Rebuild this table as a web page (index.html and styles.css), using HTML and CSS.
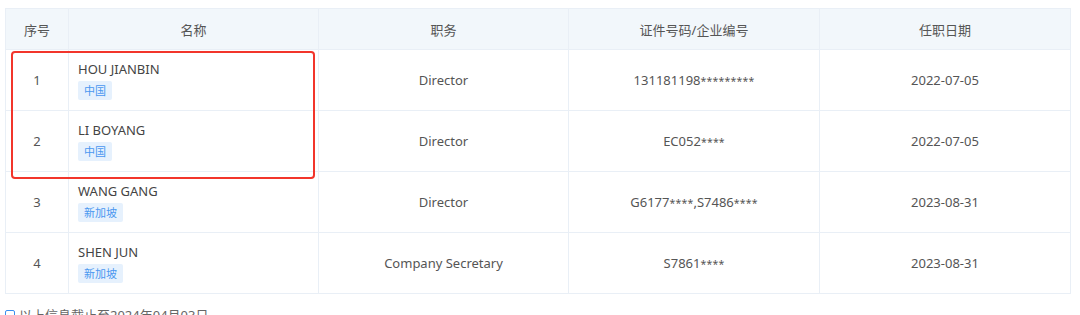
FILE: index.html
```html
<!DOCTYPE html>
<html lang="zh">
<head>
<meta charset="utf-8">
<link rel="stylesheet" href="styles.css">
</head>
<body>
<div class="wrap">
  <table class="grid">
    <colgroup>
      <col class="c-no"><col class="c-name"><col class="c-pos"><col class="c-id"><col class="c-date">
    </colgroup>
    <thead>
      <tr><th>序号</th><th>名称</th><th>职务</th><th>证件号码/企业编号</th><th>任职日期</th></tr>
    </thead>
    <tbody>
      <tr><td class="num">1</td><td class="name"><div class="nm">HOU JIANBIN</div><span class="tag">中国</span></td><td>Director</td><td>131181198<span class="mask">*********</span></td><td>2022-07-05</td></tr>
      <tr><td class="num">2</td><td class="name"><div class="nm">LI BOYANG</div><span class="tag">中国</span></td><td>Director</td><td>EC052<span class="mask">****</span></td><td>2022-07-05</td></tr>
      <tr><td class="num">3</td><td class="name"><div class="nm">WANG GANG</div><span class="tag">新加坡</span></td><td>Director</td><td>G6177<span class="mask">****</span>,S7486<span class="mask">****</span></td><td>2023-08-31</td></tr>
      <tr><td class="num">4</td><td class="name"><div class="nm">SHEN JUN</div><span class="tag">新加坡</span></td><td>Company Secretary</td><td>S7861<span class="mask">****</span></td><td>2023-08-31</td></tr>
    </tbody>
  </table>
  <div class="highlight"></div>
</div>
<div class="note"><span class="ico"></span>以上信息截止至2024年04月03日</div>
</body>
</html>
```
FILE: styles.css
```css
html, body { margin: 0; padding: 0; background: #fff; }
body {
  padding: 8px 10px 0 5px;
  font-family: "Noto Sans", "Noto Sans CJK SC", sans-serif;
  color: #555;
  font-size: 13px;
}
.wrap { position: relative; width: 1065px; }
.grid {
  width: 1065px;
  border-collapse: collapse;
  table-layout: fixed;
}
.c-no { width: 63px; }
.c-name { width: 250px; }
.c-pos { width: 250px; }
.c-id { width: 251px; }
.c-date { width: 251px; }
.grid th, .grid td {
  border: 1px solid #e9eff6;
  text-align: center;
  vertical-align: middle;
  padding: 0;
  font-weight: normal;
}
.grid th {
  background: #f2f7fb;
  height: 40px;
  color: #555;
  font-size: 13px;
}
.grid td { height: 60px; color: #555; }
.grid td.name { text-align: left; padding: 0 9px; }
.mask { font-size: 10.5px; letter-spacing: 0.2px; }
.nm { line-height: 18px; color: #444; }
.tag {
  display: inline-block;
  margin-top: 3px;
  padding: 0 6px;
  height: 19px;
  line-height: 19px;
  font-size: 11px;
  background: #e6f1fd;
  color: #4a97f0;
  border-radius: 2px;
}
.highlight {
  position: absolute;
  left: 6px;
  top: 43px;
  width: 300px;
  height: 124px;
  border: 2px solid #f2352b;
  border-radius: 4px;
  pointer-events: none;
}
.note {
  margin-top: 11px;
  display: flex;
  align-items: center;
  gap: 4px;
  font-size: 13px;
  color: #666;
}
.ico {
  width: 8px; height: 8px;
  border: 1px solid #3b8ff0;
  border-radius: 2px;
}
```
